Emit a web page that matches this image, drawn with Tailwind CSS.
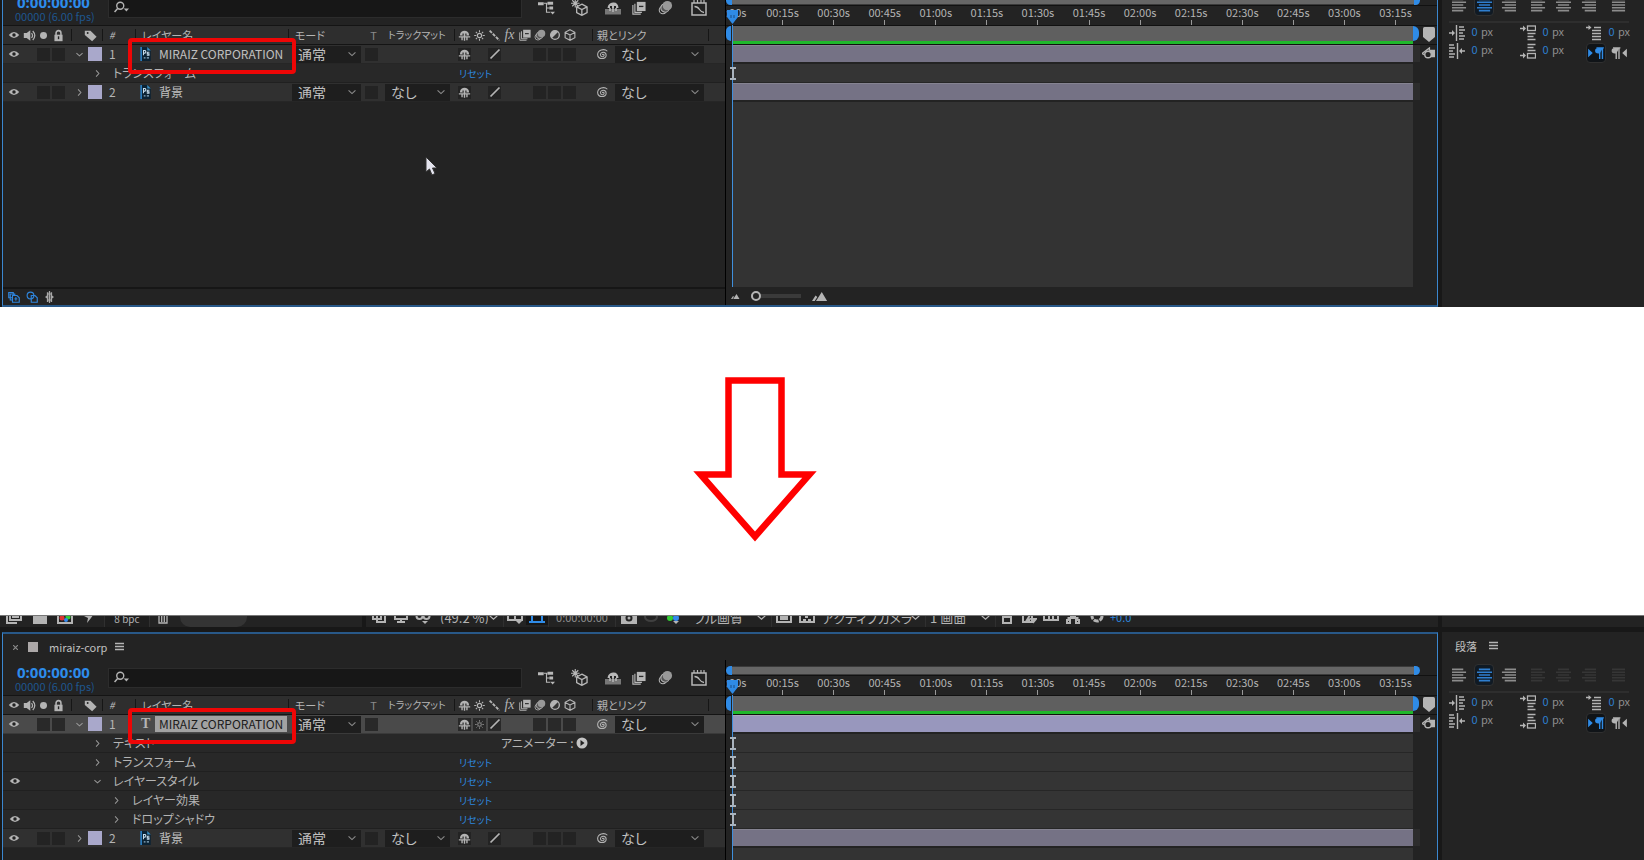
<!DOCTYPE html>
<html lang="ja">
<head>
<meta charset="utf-8">
<title>miraiz-corp</title>
<script src="https://cdn.jsdelivr.net/npm/@tailwindcss/browser@4"></script>
</head>
<body class="flex h-screen flex-col overflow-hidden bg-white font-['Noto_Sans_CJK_JP',sans-serif] text-xs leading-none text-[#b4b4b4] [font-feature-settings:'palt']">

<svg class="hidden" aria-hidden="true">
  <symbol id="eye" viewBox="0 0 16 16"><path d="M1 8Q8 0 15 8Q8 16 1 8Z" fill="currentColor"/><circle cx="8" cy="8" r="2.300" fill="#222"/></symbol>
  <symbol id="speaker" viewBox="0 0 16 16"><path d="M1 5h3.500L9 1.500v13L4.500 11H1Z" fill="currentColor"/><path d="M10.500 5q2.500 3 0 6M12 2.500q5 5.500 0 11" fill="none" stroke="currentColor" stroke-width="1.500"/></symbol>
  <symbol id="dot" viewBox="0 0 16 16"><circle cx="8" cy="8" r="4.300" fill="currentColor"/></symbol>
  <symbol id="lock" viewBox="0 0 16 16"><path d="M5 8V5a3 3 0 0 1 6 0V8" fill="none" stroke="currentColor" stroke-width="1.900"/><rect x="3" y="7" width="10" height="8" fill="currentColor"/><rect x="7.200" y="9" width="1.700" height="3.500" fill="#222"/></symbol>
  <symbol id="tag" viewBox="0 0 16 16"><path d="M1 2h7L15.500 9.500L10 15L1 7.500Z" fill="currentColor"/><circle cx="4.500" cy="5" r="1.200" fill="#222"/></symbol>
  <symbol id="shy" viewBox="0 0 16 16"><path d="M2.500 8V6.500Q3.500 2 8 2T13.500 6.500V8Z" fill="currentColor"/><path d="M5.500 8V5.500h1.800V8M8.700 8V5.500h1.800V8" fill="#333"/><path d="M8 3v11.500M1 9.700h14M5 9.700v4M11 9.700v4" stroke="currentColor" stroke-width="1.700"/></symbol>
  <symbol id="sun" viewBox="0 0 16 16"><circle cx="8" cy="8" r="2.600" fill="none" stroke="currentColor" stroke-width="1.500"/><path d="M8 1.500v2.500M8 12v2.500M1.500 8H4M12 8h2.500M3.500 3.500l1.500 1.500M11 11l1.500 1.500M3.500 12.500L5 11M11 5l1.500-1.500" stroke="currentColor" stroke-width="1.300"/></symbol>
  <symbol id="backslash" viewBox="0 0 16 16"><path d="M2 2L14 14" stroke="currentColor" stroke-width="2.300" stroke-dasharray="4 1.500"/></symbol>
  <symbol id="slash" viewBox="0 0 16 16"><path d="M2 14L14 2" stroke="currentColor" stroke-width="2.300"/></symbol>
  <symbol id="frames" viewBox="0 0 16 16"><path d="M1 4.500V15h9M3.300 3v10h8" fill="none" stroke="currentColor" stroke-width="1.300"/><path d="M5.500 1h10v10.500h-10Z" fill="currentColor"/><path d="M8 6.200h5" stroke="#2a2a2a" stroke-width="1.500"/></symbol>
  <symbol id="blur" viewBox="0 0 16 16"><circle cx="5.300" cy="10.700" r="4" fill="none" stroke="currentColor" stroke-width="1.100"/><circle cx="7.500" cy="8.500" r="4.500" fill="#555" stroke="currentColor" stroke-width="1.100"/><circle cx="10" cy="6" r="5" fill="#999"/></symbol>
  <symbol id="half" viewBox="0 0 16 16"><circle cx="8" cy="8" r="5.800" fill="#333" stroke="currentColor" stroke-width="1.800"/><path d="M4 12A5.600 5.600 0 0 1 12 4Z" fill="currentColor"/></symbol>
  <symbol id="cube" viewBox="0 0 16 16"><path d="M8 1L14.500 4.500V11.500L8 15L1.500 11.500V4.500ZM1.500 4.500L8 8L14.500 4.500M8 8V15" fill="none" stroke="currentColor" stroke-width="1.500"/></symbol>
  <symbol id="spiral" viewBox="0 0 16 16"><path d="M8 8.500c0-1.500 2-1 2 .5c0 2.200-4.500 2.500-4.500-.8c0-4 7-4 7 .6c0 5.500-10 6-10.500-.6C2 2.500 10 0 14 4" fill="none" stroke="currentColor" stroke-width="1.300"/></symbol>
  <symbol id="down" viewBox="0 0 16 16"><path d="M2.500 5.500L8 10.500L13.500 5.500" fill="none" stroke="currentColor" stroke-width="1.800"/></symbol>
  <symbol id="right" viewBox="0 0 16 16"><path d="M5.500 2.500L10.500 8L5.500 13.500" fill="none" stroke="currentColor" stroke-width="1.800"/></symbol>
  <symbol id="ps" viewBox="0 0 12 16"><path d="M1 0h7l4 4v12H1Z" fill="#0b2233"/><path d="M1 0v16" stroke="#2f8fdc" stroke-width="1.600"/><path d="M8 0l4 4H8Z" fill="#3c8fc4"/><path d="M3.700 9.500V4h1.800q1.700 1.500 0 3H3.700M10.500 6H8v1.600h2V9.300H7.500" fill="none" stroke="#c5dcec" stroke-width="1.200"/><path d="M4 12.500h2M7.500 12.500h2.500" stroke="#8fb0c6" stroke-width="1.500"/></symbol>
  <symbol id="search" viewBox="0 0 20 16"><circle cx="8" cy="5.500" r="4" fill="none" stroke="currentColor" stroke-width="1.600"/><path d="M5 8.500L1.500 12.500" stroke="currentColor" stroke-width="1.800"/><path d="M12 8.500h6l-3 3.500Z" fill="currentColor"/></symbol>
  <symbol id="flow" viewBox="0 0 18 16"><path d="M0 2h6v3H0ZM10 1.500h6v3h-6ZM12 6.500h4v3h-4ZM13 12h5l-2.500 3Z" fill="currentColor"/><path d="M6 3h4M9 3v9.500H13M9 8H12" fill="none" stroke="currentColor" stroke-width="1.200"/></symbol>
  <symbol id="draft" viewBox="0 0 18 18"><path d="M4.500 0v9M0 4.500h9M1.300 1.300l6.400 6.400M7.700 1.300L1.300 7.700" stroke="currentColor" stroke-width="1.200"/><path d="M11.500 5.500l5.500 2.800v6l-5.500 3l-5.500-3v-6ZM6 8.300l5.500 2.800L17 8.300M11.500 11v6" fill="#232323" stroke="currentColor" stroke-width="1.400"/></symbol>
  <symbol id="hide" viewBox="0 0 16 14"><path d="M0 8h16v5.500H0Z" fill="#777"/><path d="M2.500 7Q3 2 8 1.500T13.500 7Z" fill="currentColor"/><path d="M5 7V5h2v2M9 7V5h2v2" fill="#232323"/><path d="M8 2v9M5 7v3M11 7v3" fill="none" stroke="currentColor" stroke-width="1.500"/></symbol>
  <symbol id="graph" viewBox="0 0 16 16"><rect x="1" y="3" width="14" height="12" fill="none" stroke="currentColor" stroke-width="1.500"/><path d="M3.500 6.500q3 0 5 3t4.500 3" fill="none" stroke="currentColor" stroke-width="1.300"/><path d="M3 0v3M6.500 0v3M10 0v3M13 0v3" stroke="currentColor" stroke-width="1.200"/></symbol>
  <symbol id="menu" viewBox="0 0 10 10"><path d="M0 1.500h9M0 4.500h9M0 7.500h9" stroke="currentColor" stroke-width="1.300"/></symbol>
  <symbol id="play" viewBox="0 0 12 12"><circle cx="6" cy="6" r="5.500" fill="#c4c4c4"/><path d="M4.500 3L8.500 6L4.500 9Z" fill="#222"/></symbol>
  <symbol id="ibeam" viewBox="0 0 8 13"><path d="M1 1h6M1 12h6M4 1v11" stroke="#aab4be" stroke-width="2"/></symbol>
  <symbol id="head" viewBox="0 0 13 15"><path d="M1 0h11v7L6.500 14L1 7Z" fill="#2f8be6"/><path d="M5 5v3M8 5v3" stroke="#1d4f86" stroke-width="1"/></symbol>
  <symbol id="shield" viewBox="0 0 12 15"><path d="M0 1.500Q0 0 1.500 0h9Q12 0 12 1.500V10L6 15L0 10Z" fill="#b4b4b4"/></symbol>
  <symbol id="comp" viewBox="0 0 14 14"><path d="M8 3h6v8H9Z" fill="#b4b4b4"/><path d="M0 7L8 1v3M0 7l3 1.500" stroke="#b4b4b4" stroke-width="1.400" fill="none"/><circle cx="6.500" cy="8" r="3.500" fill="#222" stroke="#b4b4b4" stroke-width="1.500"/></symbol>
  <symbol id="al-l" viewBox="0 0 16 14"><path d="M0 1h12M0 4h15M0 7h12M0 10h15M0 13h12" stroke="currentColor" stroke-width="1.700"/></symbol>
  <symbol id="al-c" viewBox="0 0 16 14"><path d="M2 1h12M0 4h16M2 7h12M0 10h16M2 13h12" stroke="currentColor" stroke-width="1.700"/></symbol>
  <symbol id="al-r" viewBox="0 0 16 14"><path d="M4 1h12M1 4h15M4 7h12M1 10h15M4 13h12" stroke="currentColor" stroke-width="1.700"/></symbol>
  <symbol id="al-j" viewBox="0 0 16 14"><path d="M1 1h14M1 4h14M1 7h14M1 10h14M1 13h14" stroke="currentColor" stroke-width="1.700"/></symbol>
  <symbol id="in-l" viewBox="0 0 16 16"><path d="M0 8h4M7.500 0v16M10 2h5M10 5h6M10 8h4M10 11h6M10 14h5" stroke="currentColor" stroke-width="1.400"/><path d="M3 5l3 3l-3 3Z" fill="currentColor"/></symbol>
  <symbol id="in-r" viewBox="0 0 16 16"><path d="M12 8h4M8.500 0v16M0 2h5M0 5h6M0 8h4M0 11h6M0 14h5" stroke="currentColor" stroke-width="1.400"/><path d="M13 5l-3 3l3 3Z" fill="currentColor"/></symbol>
  <symbol id="sp-b" viewBox="0 0 16 16"><path d="M0 3.500h3M7.500 8.500h8M7.500 11.500h6M7.500 14.500h8" stroke="currentColor" stroke-width="1.300"/><rect x="7.500" y="1" width="8" height="4.500" fill="none" stroke="currentColor" stroke-width="1.300"/><path d="M3 .5l3 3l-3 3Z" fill="currentColor"/></symbol>
  <symbol id="sp-a" viewBox="0 0 16 16"><path d="M0 12.500h3M7.500 1.500h8M7.500 4.500h6M7.500 7.500h8" stroke="currentColor" stroke-width="1.300"/><rect x="7.500" y="10.500" width="8" height="4.500" fill="none" stroke="currentColor" stroke-width="1.300"/><path d="M3 9.500l3 3l-3 3Z" fill="currentColor"/></symbol>
  <symbol id="in-f" viewBox="0 0 16 16"><path d="M0 2.500h3M8 2.500h7M6 5.500h9M6 8.500h9M6 11.500h9M6 14.500h9" stroke="currentColor" stroke-width="1.400"/><path d="M2.500 0l3 2.500l-3 2.500Z" fill="currentColor"/></symbol>
  <symbol id="ltr" viewBox="0 0 17 13"><path d="M0 2L5 6.500L0 11Z" fill="currentColor"/><path d="M16 1H11q-3.500 0-3.500 3T11 7h1.500" fill="currentColor"/><path d="M9 1h8M12.500 1v12M15.500 1v12" stroke="currentColor" stroke-width="1.500"/></symbol>
  <symbol id="rtl" viewBox="0 0 17 13"><path d="M17 2L12 6.500L17 11Z" fill="currentColor"/><path d="M9 1H4Q.5 1 .5 4T4 7h1.500" fill="currentColor"/><path d="M2 1h8M5.500 1v12M8.500 1v12" stroke="currentColor" stroke-width="1.500"/></symbol>
  <symbol id="stack" viewBox="0 0 16 16"><path d="M1 2h6v7H1ZM3 4h6v8H3Z" fill="none" stroke="currentColor" stroke-width="1.500"/><path d="M6 6h6l3 3v6H6Z" fill="#232323" stroke="currentColor" stroke-width="1.500"/><path d="M10.500 8v5M8.500 10.500h4" stroke="currentColor" stroke-width="1.300"/></symbol>
  <symbol id="modes" viewBox="0 0 16 16"><circle cx="6" cy="6" r="4.500" fill="none" stroke="currentColor" stroke-width="1.500"/><path d="M7 6h5l3 3v6H7Z" fill="none" stroke="currentColor" stroke-width="1.500"/></symbol>
  <symbol id="brace" viewBox="0 0 14 16"><path d="M3.500 1.500h2v13h-2v-4.500l-2.500-2l2.500-2ZM10.500 1.500h-2v13h2v-4.500l2.500-2l-2.500-2Z" fill="#a8a8a8"/><path d="M7 0v16M4 4h6M4 12h6" fill="none" stroke="#a8a8a8" stroke-width="1.600"/></symbol>
  <symbol id="mountain" viewBox="0 0 18 10"><path d="M0 10L4 4l2 1.500L3 10ZM4.500 10L11 0L17 10Z" fill="#b4b4b4"/></symbol>
</svg>

<section id="before" class="flex h-[307px] shrink-0 flex-col justify-end overflow-hidden bg-[#232323]"></section>

<section class="h-[308px] shrink-0 pt-[70px] pl-[693px]">
  <svg class="h-[165px] w-[124px]" viewBox="0 0 124 165" aria-label="次の手順"><path d="M35.500 3.500H88.500V97.500H116.500L62 159.500L7.500 97.500H35.500Z" fill="#fff" stroke="#f00" stroke-width="6.500"/></svg>
</section>

<section class="flex min-h-0 flex-1 flex-col overflow-hidden bg-[#181818]">
  <div id="footage" class="flex h-3 shrink-0 gap-1 overflow-hidden border-t border-[#777]"></div>
  <div id="after" class="mt-[5px] flex shrink-0 flex-col"></div>
</section>

<script>
const icon = (id, cls) => `<svg class="${cls} shrink-0" aria-hidden="true"><use href="#${id}"/></svg>`;
const cols = 'grid grid-cols-[19px_14px_15px_15px_39px_30px_155px_74px_18px_75px_120px_15px_118px_1fr] items-center';

const box = (content = '', active = true) =>
  `<span class="flex w-[15px] justify-center">${active ? `<button class="flex size-[13px] items-center justify-center bg-[#212121]/80" aria-label="スイッチ">${content}</button>` : ''}</span>`;

const select = (label, value, cls) => `
  <span class="relative flex h-[17px] items-center bg-[#1e1e1e] ${cls}">
    <select aria-label="${label}" class="h-[17px] w-full appearance-none bg-transparent pl-1.5 text-sm leading-none text-[#c0c0c0] outline-none"><option>${value}</option></select>
    <svg class="pointer-events-none absolute right-1 size-[10px] text-[#8c8c8c]"><use href="#down"/></svg>
  </span>`;

const headerRow = () => `
  <div class="${cols} h-5 border-y border-[#141414] bg-[#2e2e2e] text-[11px]">
    <span class="flex justify-center pl-0.5">${icon('eye', 'size-3')}</span>
    <span class="flex justify-center">${icon('speaker', 'size-[13px]')}</span>
    <span class="flex justify-center">${icon('dot', 'size-[13px]')}</span>
    <span class="flex justify-center">${icon('lock', 'size-[13px]')}</span>
    <span class="flex h-3 items-center border-l border-[#161616] ml-[5px] pl-3">${icon('tag', 'size-[13px]')}</span>
    <span class="h-3 border-l border-[#161616] -ml-[3px] pl-1.5 text-[10px] italic leading-3">#</span>
    <span class="h-3 border-l border-[#161616] pl-1.5 leading-3">レイヤー名</span>
    <span class="h-3 border-l border-[#161616] -ml-[2px] pl-1.5 leading-3">モード</span>
    <span class="pl-px text-center text-[#8a8a8a]">T</span>
    <span class="pl-1.5 text-[10px] whitespace-nowrap">トラックマット</span>
    <span class="-ml-[3px] flex h-3 items-center border-l border-[#161616] pl-0.5">
      ${['shy', 'sun', 'backslash'].map(i => `<span class="flex w-[15px] justify-center">${icon(i, 'size-[13px]')}</span>`).join('')}
      <span class="w-[15px] text-center font-['Liberation_Serif',serif] text-sm leading-3 italic">fx</span>
      ${['frames', 'blur', 'half', 'cube'].map(i => `<span class="flex w-[15px] justify-center">${icon(i, 'size-3')}</span>`).join('')}
    </span>
    <span></span>
    <span class="h-3 border-l border-[#161616] pl-1 leading-3">親とリンク</span>
    <span class="h-3 border-l border-[#161616] -ml-0.5"></span>
  </div>`;

const layerRow = ({ n, name, open, text, selected, matte, marked }) => `
  <div class="${cols} relative h-[19px] border-b ${selected ? 'border-[#3a3a3a] bg-[#4a4a4a]' : 'border-[#262626] bg-[#303030]'}">
    <button class="flex justify-center pl-0.5" aria-label="表示">${icon('eye', 'size-3')}</button>
    <span></span>
    ${box()}${box()}
    <span class="flex items-center gap-1 pl-[9px]">
      <button aria-label="開閉">${icon(open ? 'down' : 'right', 'size-[9px] text-[#999]')}</button>
      <span class="size-[14px] bg-[#a9a8cb]"></span>
    </span>
    <span class="pl-1">${n}</span>
    <span class="flex items-center pl-[5px]">
      <span class="flex w-[15px] items-center">${text ? '<b class="pl-px font-[\'Liberation_Serif\',serif] text-sm leading-none">T</b>' : icon('ps', 'h-[14px] w-[11px]')}</span>
      <span class="flex h-4 items-center px-1 whitespace-nowrap ${selected ? 'bg-[#a2a2a2] text-[#1c1c1c]' : 'text-[#c0c0c0]'}">${name}</span>
    </span>
    ${select('モード', '通常', 'ml-0.5 w-[69px]')}
    ${box()}
    ${matte ? select('トラックマット', 'なし', 'ml-[3px] w-[65px]') : '<span></span>'}
    <span class="flex">
      ${box(icon('shy', 'size-[13px]'))}${selected ? box(icon('sun', 'size-[11px] text-[#888]')) : box('', false)}${box(icon('slash', 'size-3'))}
      ${box('', false)}${box('', false)}${box()}${box()}${box()}
    </span>
    <span></span>
    <span class="flex items-center pl-1">${icon('spiral', 'size-[13px]')}${select('親とリンク', 'なし', 'ml-1.5 w-[89px]')}</span>
    <span></span>
    ${marked ? '<span class="pointer-events-none absolute -top-[7px] left-[125px] z-10 h-9 w-[168px] rounded-sm border-4 border-[#ee0606]"></span>' : ''}
  </div>`;

const propRow = ({ name, deep, open, eye, extra }) => `
  <div class="grid h-[19px] grid-cols-[19px_435px_1fr] items-center border-b border-[#202020] bg-[#282828]">
    <span class="flex pl-1.5">${eye ? `<button aria-label="表示">${icon('eye', 'size-3')}</button>` : ''}</span>
    <span class="flex items-center gap-2.5 ${deep ? 'pl-[88px]' : 'pl-[69px]'}">
      <button class="w-3 flex justify-center" aria-label="開閉">${icon(open ? 'down' : 'right', 'size-[9px] text-[#999]')}</button>${name}
    </span>
    ${extra ? `<span class="flex items-center gap-0.5 pl-11">アニメーター :<button aria-label="追加">${icon('play', 'size-3')}</button></span>`
            : '<span><button class="pl-0.5 text-[10px] text-[#2d86de]">リセット</button></span>'}
  </div>`;

const times = ['00:15s','00:30s','00:45s','01:00s','01:15s','01:30s','01:45s','02:00s','02:15s','02:30s','02:45s','03:00s','03:15s'];

const trackRow = r => r.n
  ? `<div class="flex h-[19px] items-start pl-[7px] pr-0.5"><span class="h-[17px] flex-1 border-t ${r.selected ? 'border-[#aaa9b8] bg-[#9897bd]' : 'border-[#858391] bg-[#757285]'}"></span><span class="h-[17px] w-[7px] bg-[#2d2d2d]"></span><span class="ml-0.5 w-[13px]">${r.n === 1 ? icon('comp', 'mt-0.5 size-[13px]') : ''}</span></div>`
  : `<div class="h-[19px] pl-[7px] pr-[24px]"><div class="flex h-full items-center border-b border-[#262626] bg-[#343434]">${icon('ibeam', 'relative z-10 -ml-1 h-[13px] w-2')}</div></div>`;

const timelinePanel = (rows, cursor) => `
  <div class="flex min-w-0 flex-1 flex-col border-x border-y-2 border-x-[#3b87cf] border-y-[#285888] bg-[#232323]">
    <div class="flex h-[26px] shrink-0 items-center pl-2.5">
      <button class="w-[7px] text-[10px] text-[#888]" aria-label="閉じる"><svg class="size-[5px]" viewBox="0 0 5 5"><path d="M0 0L5 5M5 0L0 5" stroke="currentColor" stroke-width="1.200"/></svg></button>
      <span class="ml-2 size-[10px] bg-[#aca8a8]"></span>
      <span class="ml-[11px] text-[11px] text-[#c0c0c0]">miraiz-corp</span>
      <button class="ml-2" aria-label="メニュー">${icon('menu', 'size-[10px]')}</button>
    </div>
    <div class="flex min-h-0 flex-1">
      <div class="flex w-[722px] shrink-0 flex-col">
        <div class="flex h-[35px] shrink-0 items-center">
          <div class="w-[105px] pl-3">
            <div class="pl-0.5 font-['Open_Sans',sans-serif] text-[15px] leading-4 font-bold text-[#2d8ceb]">0:00:00:00</div>
            <div class="text-[11px] leading-3 whitespace-nowrap text-[#1e568f]">00000 (6.00 fps)</div>
          </div>
          <label class="flex h-5 w-[414px] items-center border border-[#2c2c2c] bg-[#171717] pl-1">${icon('search', 'h-[14px] w-[18px]')}
            <input type="search" aria-label="検索" class="h-4 min-w-0 flex-1 bg-transparent outline-none">
          </label>
          <div class="ml-4 flex flex-1 items-center text-[#b8b8b8]">
            <button aria-label="ミニフローチャート">${icon('flow', 'h-4 w-[17px]')}</button>
            <button class="ml-4" aria-label="ドラフト 3D">${icon('draft', 'size-[17px]')}</button>
            <button class="ml-[17px]" aria-label="シャイ">${icon('hide', 'h-[14px] w-4')}</button>
            <button class="ml-[11px]" aria-label="フレームブレンド">${icon('frames', 'size-[14px]')}</button>
            <button class="ml-3" aria-label="モーションブラー">${icon('blur', 'size-[15px]')}</button>
            <button class="ml-[18px]" aria-label="グラフエディター">${icon('graph', 'size-4')}</button>
          </div>
        </div>
        ${headerRow()}
        ${rows.map(r => r.n ? layerRow(r) : propRow(r)).join('')}
        <div class="relative flex-1">${cursor ? '<svg class="absolute top-[54px] left-[422px] h-5 w-[14px]" viewBox="0 0 14 20"><path d="M1 1V16L4.500 13L7 19L10 17.500L7.500 12H12Z" fill="#e4e4ee" stroke="#333"/></svg>' : ''}</div>
        <div class="flex h-[18px] shrink-0 items-center gap-1.5 border-t-2 border-[#161616] pl-[5px] text-[#2f86dd]">
          <button aria-label="スイッチ">${icon('stack', 'size-3')}</button>
          <button aria-label="転送制御">${icon('modes', 'size-3')}</button>
          <button aria-label="イン / アウト">${icon('brace', 'h-3 w-[11px]')}</button>
        </div>
      </div>
      <div class="relative flex min-w-0 flex-1 flex-col overflow-hidden border-l border-black">
        <div class="mt-1.5 flex h-[9px] shrink-0 pr-[17px]">
          <span class="w-1.5 rounded-l-full bg-[#2f8be6]"></span><span class="flex-1 border-y border-[#3a3a3a] bg-[#666]"></span><span class="w-1.5 rounded-r-full bg-[#2f8be6]"></span>
        </div>
        <div class="flex h-5 shrink-0 border-t border-[#111] pr-4 text-[11px]">
          <span class="flex w-[31px] justify-start leading-3">:00s</span>
          ${times.map(t => `<span class="flex min-w-0 flex-1 flex-col items-center justify-between leading-3">${t}<i class="h-[5px] w-px shrink-0 bg-[#999]"></i></span>`).join('')}
        </div>
        <div class="flex h-5 shrink-0 items-start border-y border-[#111]">
          <span class="h-[15px] w-[5px] rounded-l-md bg-[#2f8be6]"></span>
          <span class="ml-0.5 h-[18px] flex-1 border-b-3 border-[#1fb82c] bg-[#5f5f5f]"></span>
          <span class="h-[15px] w-1.5 rounded-r-md bg-[#2f8be6]"></span>
          <span class="mr-0.5 ml-1 w-3">${icon('shield', 'mt-px h-[15px] w-3')}</span>
        </div>
        ${rows.map(trackRow).join('')}
        <div class="flex-1 pr-[24px] pl-[7px]"><div class="h-full bg-[#333]"></div></div>
        <div class="flex h-[18px] shrink-0 items-center pl-[5px]">
          ${icon('mountain', 'h-[5px] w-[9px]')}
          <input type="range" min="0" max="100" value="0" aria-label="ズーム" class="mx-[11px] h-[10px] w-[50px] appearance-none bg-transparent [&::-webkit-slider-runnable-track]:h-1 [&::-webkit-slider-runnable-track]:bg-[#3a3a3a] [&::-webkit-slider-thumb]:-mt-[3px] [&::-webkit-slider-thumb]:size-[10px] [&::-webkit-slider-thumb]:appearance-none [&::-webkit-slider-thumb]:rounded-full [&::-webkit-slider-thumb]:border-2 [&::-webkit-slider-thumb]:border-[#b4b4b4] [&::-webkit-slider-thumb]:bg-[#232323]">
          ${icon('mountain', 'h-[9px] w-4')}
        </div>
        <div class="absolute top-5 bottom-[18px] left-0 flex w-[13px] flex-col items-center">${icon('head', 'h-[15px] w-[13px]')}<i class="w-px flex-1 bg-[#3f8fdc]"></i></div>
      </div>
    </div>
  </div>`;

const field = (i, label) => `
  <label class="flex items-start">${icon(i, 'size-4')}<input aria-label="${label}" value="0" class="ml-1 h-3 w-[11px] bg-transparent text-center leading-3 text-[#2d7fd0] outline-none"><span class="ml-px leading-3 text-[#8e8e8e]">px</span></label>`;

const paragraphPanel = faded => `
  <div class="w-[202px] shrink-0 bg-[#232323] pr-[15px] pl-[7px]">
    <div class="flex h-7 items-center gap-3 pl-1.5"><span class="text-[11px] text-[#c0c0c0]">段落</span><button aria-label="メニュー">${icon('menu', 'size-[10px]')}</button></div>
    <div class="mt-[3px] flex h-6 items-center pl-[3px] text-[#8c8c8c]">
      <button aria-label="左揃え">${icon('al-l', 'h-[14px] w-[15px]')}</button>
      <button class="mx-[7px] flex h-[22px] w-5 items-center justify-center rounded-sm border border-[#303030] bg-[#101a24] text-[#2f7fd0]" aria-label="中央揃え">${icon('al-c', 'h-[14px] w-[15px]')}</button>
      <button aria-label="右揃え">${icon('al-r', 'h-[14px] w-[15px]')}</button>
      <span class="ml-[15px] flex flex-1 items-center gap-2.5 ${faded ? 'text-[#363636]' : ''}">
        <button aria-label="最終行左揃え">${icon('al-l', 'h-[14px] w-[15px]')}</button>
        <button aria-label="最終行中央揃え">${icon('al-c', 'h-[14px] w-[15px]')}</button>
        <button aria-label="最終行右揃え">${icon('al-r', 'h-[14px] w-[15px]')}</button>
        <button class="ml-[5px]" aria-label="両端揃え">${icon('al-j', 'h-[14px] w-[15px]')}</button>
      </span>
    </div>
    <div class="mt-1 border-t-2 border-[#2e2e2e]"></div>
    <div class="mt-0.5 grid grid-cols-[71px_66px_1fr] gap-y-0.5 text-[11px]">
      ${field('in-l', '左インデント')}${field('sp-b', '段落前の間隔')}${field('in-f', '1行目インデント')}
      ${field('in-r', '右インデント')}${field('sp-a', '段落後の間隔')}
      <span class="flex items-start gap-[5px]">
        <button class="flex h-5 w-5 items-center justify-center rounded-sm border border-[#303030] bg-[#101418] text-[#2f8be6]" aria-label="左から右">${icon('ltr', 'h-3 w-4')}</button>
        <button class="flex h-5 items-center" aria-label="右から左">${icon('rtl', 'h-3 w-4')}</button>
      </span>
    </div>
  </div>`;

const workspace = (rows, cursor, faded) => `
  <div class="flex h-[345px] shrink-0 gap-1 bg-[#181818] pl-0.5">${timelinePanel(rows, cursor)}${paragraphPanel(faded)}</div>`;

document.getElementById('before').innerHTML = workspace([
  { n: 1, name: 'MIRAIZ CORPORATION', open: true, marked: true },
  { name: 'トランスフォーム' },
  { n: 2, name: '背景', matte: true },
], true, false);

document.getElementById('after').innerHTML = workspace([
  { n: 1, name: 'MIRAIZ CORPORATION', open: true, text: true, selected: true, marked: true },
  { name: 'テキスト', extra: true },
  { name: 'トランスフォーム' },
  { name: 'レイヤースタイル', open: true, eye: true },
  { name: 'レイヤー効果', deep: true },
  { name: 'ドロップシャドウ', deep: true, eye: true },
  { n: 2, name: '背景', matte: true },
], false, true);

const glyph = (body, cls, label) => `<button class="flex shrink-0 justify-center ${cls}" aria-label="${label}"><svg class="h-4 w-4" viewBox="0 0 16 16" fill="none" stroke="currentColor" stroke-width="2">${body}</svg></button>`;
const pick = (label, value, cls) => `<span class="relative flex h-5 shrink-0 items-center border-r border-[#303030] ${cls}"><select aria-label="${label}" class="h-5 w-full appearance-none bg-transparent pl-1 text-[13px] leading-none outline-none"><option>${value}</option></select><svg class="pointer-events-none absolute right-1 size-[11px]"><use href="#down"/></svg></span>`;
document.getElementById('footage').innerHTML = `
  <div class="flex w-[362px] shrink-0 flex-col justify-end bg-[#232323]">
    <div class="flex h-5 shrink-0 items-center">
      ${glyph('<path d="M1 5v9h10M4 2h11v9H4Z"/><path d="M6 8h7"/>', 'w-7', 'フッテージを変換')}
      ${glyph('<path d="M2 3h12v11H2Z" fill="currentColor"/>', 'w-[24px]', '新規フォルダー')}
      ${glyph('<path d="M1 2h14v12H1Z"/><circle cx="5" cy="9" r="2.500" fill="#d33" stroke="none"/><circle cx="11" cy="8" r="2.500" fill="#3c3" stroke="none"/><circle cx="9" cy="11" r="2" fill="#38e" stroke="none"/>', 'w-[25px]', '新規コンポジション')}
      ${glyph('<path d="M2 7l5-5h7l-5 7-4 5l1-5Z" fill="currentColor" stroke="none"/>', 'w-[25px]', '調整')}
      <button class="ml-0.5 h-5 w-[46px] shrink-0 border-x border-[#303030] bg-[#1e1e1e] pt-1 text-[10px]">8 bpc</button>
      ${glyph('<path d="M4 4h8v10H4ZM6.700 4v9M9.300 4v9" stroke-width="1.300"/>', 'w-[26px]', '削除')}
      <span class="ml-1 h-5 w-[67px] rounded-full bg-[#343434]"></span>
    </div>
  </div>
  <div class="flex min-w-0 flex-1 flex-col justify-end overflow-hidden bg-[#232323]">
    <div class="flex h-5 shrink-0 items-center">
      ${glyph('<path d="M2 3h8v7H2ZM6 6h8v7H6Z"/>', 'w-[26px]', 'プレビュー')}
      ${glyph('<path d="M2 2h12v8H2ZM8 10v3M4 13h8"/>', 'w-[18px]', 'モニター')}
      ${glyph('<circle cx="4.500" cy="7" r="3"/><circle cx="11.500" cy="7" r="3"/><path d="M7 12h6l-3 3Z" fill="currentColor" stroke="none"/>', 'w-[26px]', '3D')}
      ${pick('拡大率', '(49.2 %)', 'w-[68px]')}
      ${glyph('<path d="M1 3h14v8H1ZM8 3v8"/><path d="M9 12h6l-3 3Z" fill="currentColor" stroke="none"/>', 'w-[22px]', 'グリッド')}
      ${glyph('<path d="M3 2h10v11H3ZM0 13h3M13 13h3"/>', 'w-[22px] bg-[#161616] text-[#2f8be6]', 'マスク')}
      <button class="h-5 w-[68px] shrink-0 border-x border-[#303030] text-[11px] text-[#909090]">0:00:00:00</button>
      ${glyph('<path d="M1 3h14v11H1Z" fill="currentColor"/><circle cx="8" cy="9" r="2.500" stroke="#232323"/>', 'w-[26px]', 'スナップショット')}
      ${glyph('<ellipse cx="8" cy="8" rx="6" ry="4"/>', 'w-[18px] text-[#404040]', 'スナップショットを表示')}
      ${glyph('<circle cx="8" cy="4" r="3" fill="#d33" stroke="none"/><circle cx="5" cy="9" r="3" fill="#3c3" stroke="none"/><circle cx="11" cy="9" r="3" fill="#38e" stroke="none"/><path d="M8 12h6l-3 3Z" fill="currentColor" stroke="none"/>', 'w-[26px]', 'チャンネル')}
      ${pick('解像度', 'フル画質', 'ml-1 w-[82px]')}
      ${glyph('<path d="M1 2h14v11H1Z"/><path d="M5 5h6v5H5Z" fill="currentColor"/>', 'w-[24px]', '関心領域')}
      ${glyph('<path d="M1 2h14v11H1Z"/><path d="M4 5h3M9 5h3M6 8h3M4 11h3M9 11h3"/>', 'w-[22px]', '透明グリッド')}
      ${pick('ビュー', 'アクティブカメラ', 'w-[108px]')}
      ${pick('画面', '1 画面', 'w-[70px]')}
      ${glyph('<path d="M4 8h8v6H4ZM4 3h8v3"/>', 'w-[22px]', 'ロック')}
      ${glyph('<path d="M2 2h9v11H2ZM9 6l-3 5h3"/><path d="M10 10h5l-2.500 3Z" fill="currentColor"/>', 'w-[22px]', '高速プレビュー')}
      ${glyph('<path d="M1 12V4M15 12V4M1 11h14M6 5v6M10 5v6"/>', 'w-[22px]', 'タイムライン')}
      ${glyph('<path d="M6 4h4v3H6ZM2 11h3v3H2ZM11 11h3v3h-3ZM8 7v2M3.500 11V9h9v2"/>', 'w-[22px]', 'フローチャート')}
      ${glyph('<circle cx="8" cy="7" r="5" stroke-width="3" stroke-dasharray="5 1"/>', 'ml-0.5 w-[22px]', '露光量')}
      <button class="pl-0.5 text-[11px] text-[#2d86de]">+0.0</button>
    </div>
  </div>
  <div class="w-[202px] shrink-0 bg-[#232323]"></div>`;
</script>
</body>
</html>
